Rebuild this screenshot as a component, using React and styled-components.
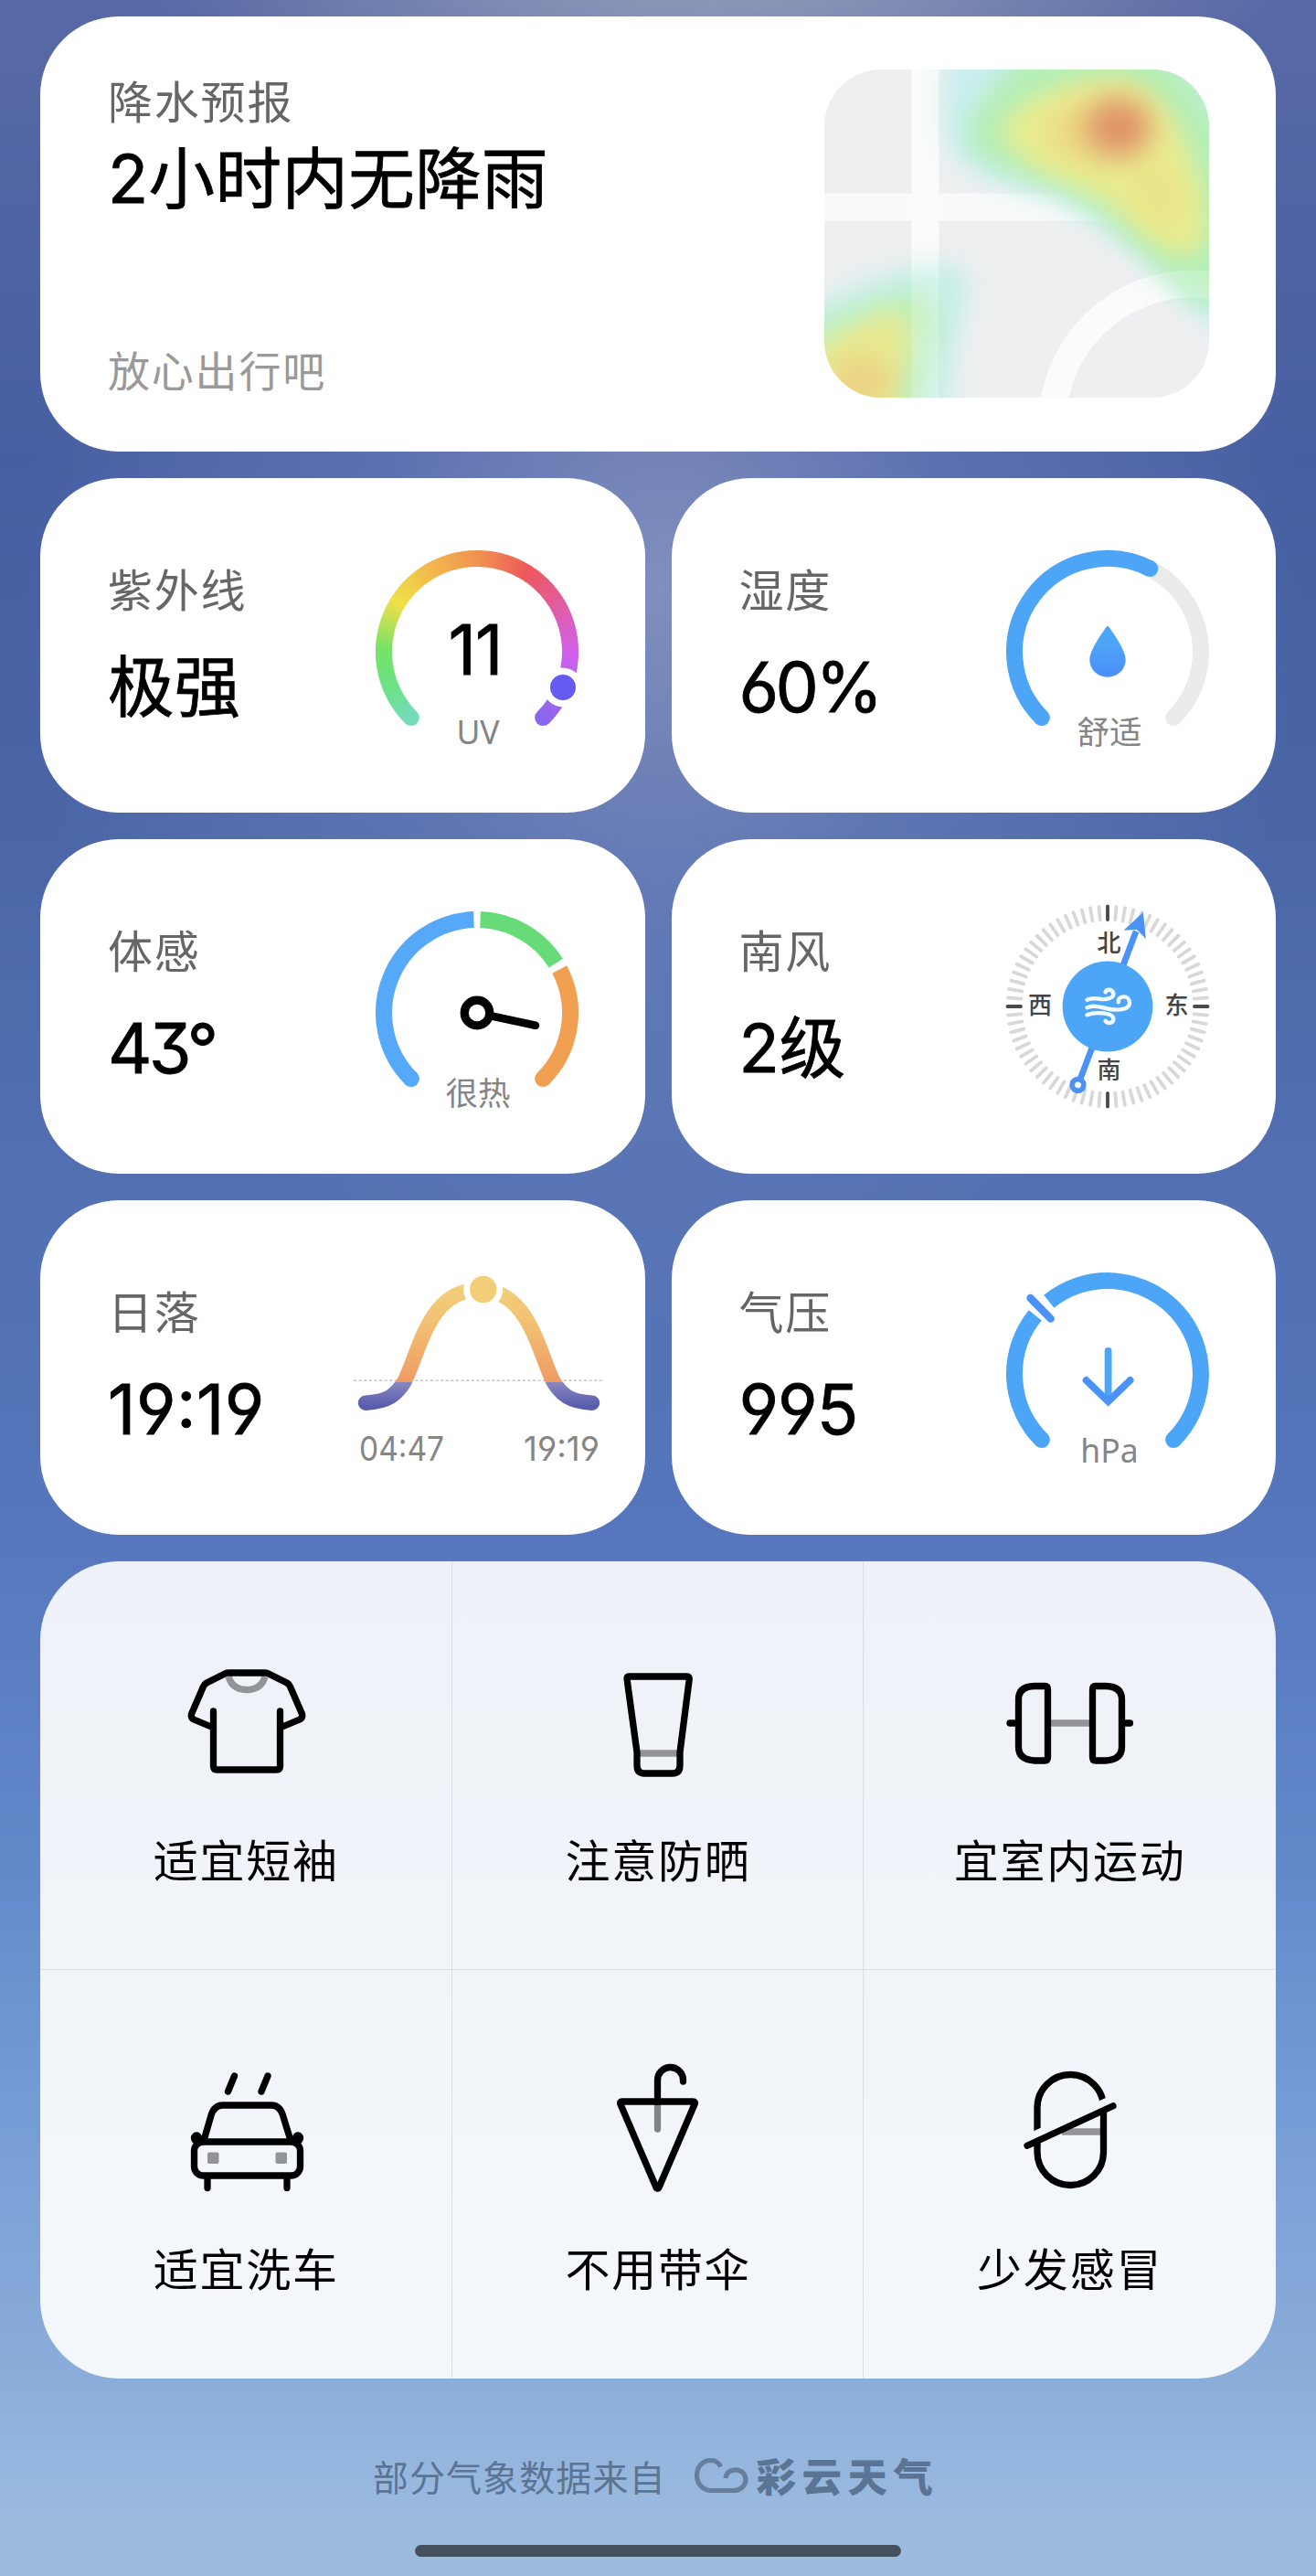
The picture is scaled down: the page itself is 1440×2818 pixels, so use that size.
import React from "react";
import styled, { createGlobalStyle } from "styled-components";

const BLUE = "#4da5f7";
const DEEP_BLUE = "#4a92f5";
const GREY = "#939398";

const GlobalStyle = createGlobalStyle`
	* {
		box-sizing: border-box;
	}

	body {
		margin: 0;
		font-family: "Noto Sans CJK SC", sans-serif;
	}
`;

const Page = styled.main`
	width: 1440px;
	height: 2818px;
	padding: 18px 44px 0;
	display: flex;
	flex-direction: column;
	gap: 29px;
	overflow: hidden;
	background:
		radial-gradient(ellipse 620px 160px at 780px -20px, rgba(160, 168, 188, 0.8), rgba(160, 168, 188, 0)),
		radial-gradient(ellipse 700px 860px at 725px 640px, rgba(150, 160, 200, 0.72), rgba(130, 145, 200, 0.36) 45%, rgba(110, 130, 200, 0)),
		linear-gradient(180deg, #5869a5 0, #475fa2 500px, #4a66a6 900px, #5270b2 1300px, #5677bd 1680px, #6389cb 2050px, #759cd5 2300px, #8badda 2600px, #9bbbdf 2760px, #9bbbdf 100%);
`;

const Card = styled.section`
	background: #fff;
	border-radius: 86px;
	display: flex;
	justify-content: space-between;
`;

const RainCard = styled(Card)`
	height: 476px;
	padding: 58px 73px 61px 74px;
`;

const RainText = styled.div`
	display: flex;
	flex-direction: column;
	padding-top: 3px;
`;

const Label = styled.div`
	font-size: 49px;
	line-height: 60px;
	letter-spacing: 1.8px;
	color: #666;
`;

const Value = styled.div`
	font-family: Inter, "Noto Sans CJK SC", sans-serif;
	font-feature-settings: "cv03", "cv04", "cv09", "calt";
	font-weight: 400;
	-webkit-text-stroke: 0.8px #000;
	font-size: ${({ $size = 75 }) => $size}px;
	line-height: 84px;
	letter-spacing: ${({ $spacing = 0 }) => $spacing}px;
	color: #000;
	white-space: nowrap;
`;

const RainTitle = styled(Value)`
	margin-top: 15px;
`;

const RainNote = styled(Label)`
	margin-top: auto;
	font-size: 46px;
	color: #999;
`;

const MapTile = styled.svg`
	display: block;
	width: 421px;
	height: 359px;
	border-radius: 62px;
	overflow: hidden;
`;

const MetricGrid = styled.div`
	display: grid;
	grid-template-columns: 1fr 1fr;
	grid-auto-rows: 366px;
	gap: 29px;
`;

const MetricCard = styled(Card)`
	align-items: center;
	padding: 0 73px 0 74px;
`;

const MetricText = styled.div`
	display: flex;
	flex-direction: column;
	gap: 37px;
	padding-bottom: 5px;
`;

const GaugeSvg = styled.svg`
	display: block;
	width: 222px;
	height: 222px;
	margin-top: ${({ $shift = 14 }) => $shift}px;
	overflow: visible;
`;

const SunSvg = styled.svg`
	display: block;
	width: 274px;
	height: 210px;
	margin: 14px -28px 0 0;
	overflow: visible;
`;

const Caption = styled.text`
	font-family: "Noto Sans", "Noto Sans CJK SC", sans-serif;
	font-size: 35.5px;
	fill: #858585;
	text-anchor: middle;
`;

const TimeText = styled.text`
	font-family: Inter, sans-serif;
	font-feature-settings: "cv03", "cv04", "calt";
	font-size: 36.5px;
	fill: #858585;
`;

const GaugeNumber = styled.text`
	font-family: Inter, sans-serif;
	font-weight: 400;
	font-size: 75px;
	letter-spacing: -1px;
	text-anchor: middle;
	stroke: #000;
	stroke-width: 0.8px;
`;

const Direction = styled.text`
	font-family: "Noto Sans CJK SC", sans-serif;
	font-weight: 500;
	font-size: 26px;
	fill: #444;
	text-anchor: middle;
`;

const TipsCard = styled.section`
	height: 894px;
	border-radius: 86px;
	overflow: hidden;
	display: grid;
	grid-template-columns: repeat(3, 1fr);
	grid-template-rows: repeat(2, 1fr);
	background: linear-gradient(180deg, #eef2f8, #f4f7fb);
`;

const Tip = styled.div`
	display: flex;
	flex-direction: column;
	align-items: center;
	padding-top: 97px;
	border-right: 1px solid ${({ $last }) => ($last ? "transparent" : "#dadee5")};
	border-bottom: 1px solid ${({ $bottom }) => ($bottom ? "transparent" : "#dadee5")};
`;

const TipIcon = styled.svg`
	display: block;
	width: 160px;
	height: 160px;
	fill: none;
	stroke: #000;
	stroke-width: 7.3;
	stroke-linecap: round;
	stroke-linejoin: round;
`;

const TipLabel = styled(Label)`
	margin: 38px 0 0 1px;
	color: #000;
`;

const Footer = styled.footer`
	margin-top: 47px;
	display: flex;
	justify-content: center;
	align-items: center;
	line-height: 60px;
	color: #5b7493;
`;

const Source = styled.span`
	font-size: 39px;
	letter-spacing: 1.1px;
`;

const CloudLogo = styled.svg`
	width: 60px;
	height: 42px;
	margin-left: 30px;
	fill: none;
	stroke: #667f9f;
	stroke-width: 5.2;
`;

const Brand = styled.span`
	margin: 0 5px 0 9px;
	font-size: 43.5px;
	font-weight: 900;
	letter-spacing: 6.4px;
`;

const HomeBar = styled.div`
	width: 532px;
	height: 13px;
	margin: 17px auto 0;
	border-radius: 7px;
	background: #46515e;
`;

// Angles run clockwise from the lower-left end of the 270 degree dial.
const point = (deg, r = 102) => {
	const a = ((deg + 135) * Math.PI) / 180;
	return [r * Math.cos(a), r * Math.sin(a)];
};

const arc = (from, to, r = 102) => {
	const [x1, y1] = point(from, r);
	const [x2, y2] = point(to, r);
	return `M${x1.toFixed(2)} ${y1.toFixed(2)}A${r} ${r} 0 ${to - from > 180 ? 1 : 0} 1 ${x2.toFixed(2)} ${y2.toFixed(2)}`;
};

const EndCap = ({ at, fill }) => {
	const [cx, cy] = point(at);
	return <circle cx={cx} cy={cy} r="9" fill={fill} />;
};

const Arc = ({ from, to, color }) => (
	<path d={arc(from, to)} fill="none" stroke={color} strokeWidth="18" />
);

const UV_STOPS = [
	[0, [118, 220, 186]],
	[20, [108, 226, 138]],
	[45, [118, 226, 104]],
	[76, [240, 224, 72]],
	[105, [241, 184, 78]],
	[135, [240, 146, 80]],
	[166, [238, 88, 92]],
	[200, [222, 94, 176]],
	[225, [210, 96, 236]],
	[245, [168, 102, 238]],
	[270, [138, 102, 238]],
];

const uvColor = (deg) => {
	const i = UV_STOPS.findIndex(([d]) => d > deg) - 1;
	const [d0, c0] = UV_STOPS[i];
	const [d1, c1] = UV_STOPS[i + 1];
	const t = (deg - d0) / (d1 - d0);
	return `rgb(${c0.map((c, k) => Math.round(c + (c1[k] - c) * t)).join(",")})`;
};

const UvGauge = () => (
	<GaugeSvg viewBox="-111 -111 222 222">
		<EndCap at={0} fill={uvColor(0)} />
		<EndCap at={270} fill={uvColor(269.9)} />
		{Array.from({ length: 135 }, (_, i) => (
			<Arc key={i} from={i * 2} to={Math.min(i * 2 + 2.6, 270)} color={uvColor(i * 2)} />
		))}
		<circle cx="94" cy="39" r="21.5" fill="#fff" />
		<circle cx="94" cy="39" r="14" fill="#655bf0" />
		<GaugeNumber x="-2" y="24.5">11</GaugeNumber>
		<Caption x="1" y="101">UV</Caption>
	</GaugeSvg>
);

const HumidityGauge = () => (
	<GaugeSvg viewBox="-111 -111 222 222">
		<defs>
			<linearGradient id="drop" x1="0" y1="0" x2="0" y2="1">
				<stop offset="0.3" stopColor={BLUE} />
				<stop offset="1" stopColor="#4a8ff8" />
			</linearGradient>
		</defs>
		<Arc from={162} to={270} color="#ebebeb" />
		<EndCap at={270} fill="#ebebeb" />
		<Arc from={0} to={162} color={BLUE} />
		<EndCap at={0} fill={BLUE} />
		<EndCap at={162} fill={BLUE} />
		<path d="M-1.6 -27Q0 -29 1.6 -27C9 -16 19.7 -1 19.7 8.5C19.7 19.5 10.5 27.7 0 27.7S-19.7 19.5 -19.7 8.5C-19.7 -1 -9 -16 -1.6 -27Z" fill="url(#drop)" />
		<Caption x="2" y="101">舒适</Caption>
	</GaugeSvg>
);

const FeelsLikeGauge = () => (
	<GaugeSvg viewBox="-111 -111 222 222">
		<EndCap at={0} fill="#55a9f8" />
		<EndCap at={270} fill="#f0a050" />
		<Arc from={0} to={133} color="#55a9f8" />
		<Arc from={137} to={192.8} color="#68db79" />
		<Arc from={197.2} to={270} color="#f0a050" />
		<circle r="13.8" fill="none" stroke="#000" strokeWidth="9.2" />
		<path d="M16 3.5L64 13.8" stroke="#000" strokeWidth="8.6" strokeLinecap="round" />
		<Caption x="1" y="101">很热</Caption>
	</GaugeSvg>
);

const Compass = () => (
	<GaugeSvg $shift={0} viewBox="-111 -111 222 222">
		{Array.from({ length: 72 }, (_, i) => (
			<line
				key={i}
				y1="-109.5"
				y2="-95"
				transform={`rotate(${i * 5})`}
				stroke={i % 18 ? "#d8d8d8" : "#4a4a4a"}
				strokeWidth="3.8"
				strokeLinecap="round"
			/>
		))}
		<Direction x="1.5" y="-60.5">北</Direction>
		<Direction x="1.5" y="79">南</Direction>
		<Direction x="-74" y="7.5">西</Direction>
		<Direction x="75.5" y="7.5">东</Direction>
		<g transform="rotate(20.7)">
			<path d="M0 -88V84" stroke={DEEP_BLUE} strokeWidth="6.8" />
			<path d="M0 -110L13 -84L0 -90L-13 -84Z" fill={DEEP_BLUE} />
			<circle cy="91.8" r="6.3" fill="#fff" stroke={DEEP_BLUE} strokeWidth="5.8" />
		</g>
		<circle r="49.4" fill={BLUE} />
		<g fill="none" stroke="#f2fbff" strokeWidth="4.4" strokeLinecap="round">
			<path d="M-22.5 -7.3C-14 -11 -9 -7 -2 -8C4 -8.8 6.6 -11 6.4 -14C6.2 -17 3.8 -18.2 1.5 -18.2C-0.5 -18.2 -2 -17.3 -2.4 -15.6" />
			<path d="M-22.5 1.3C-13 -2.5 -6 2 4 3.2C14 4.4 24 3 24 -4C24 -8 21 -10.6 17.8 -10.6C14 -10.6 11.4 -8.5 11.8 -4.8" />
			<path d="M-22.5 9.2C-15 6 -8 7 -3 7.6C3 8.4 6.4 10.5 6.4 14C6.4 16.8 4 18 2 18C0 18 -1.6 17.4 -2.4 15.8" />
		</g>
	</GaugeSvg>
);

const SunChart = () => (
	<SunSvg viewBox="0 0 274 210">
		<defs>
			<linearGradient id="sunPath" gradientUnits="userSpaceOnUse" x1="0" y1="6" x2="0" y2="146">
				<stop offset="0" stopColor="#f3d07a" />
				<stop offset="0.3" stopColor="#f2c173" />
				<stop offset="0.77" stopColor="#f09a64" />
				<stop offset="0.77" stopColor="#8c88c2" />
				<stop offset="0.96" stopColor="#5a5cae" />
			</linearGradient>
		</defs>
		<path d="M0 112.3H274" stroke="#c4c4c4" strokeWidth="1.4" strokeDasharray="3 2.6" />
		<path
			d="M13 136.7C37 135.5 47 128 56 112.5C73 77 83 13 137 13S201 77 218 112.5C227 128 237 135.5 261 136.7"
			fill="none"
			stroke="url(#sunPath)"
			strokeWidth="16.5"
			strokeLinecap="round"
		/>
		<circle cx="141.7" cy="12.5" r="21.5" fill="#fff" />
		<circle cx="141.7" cy="12.5" r="14.7" fill="#f3ce79" />
		<TimeText x="6" y="200" textLength="93" lengthAdjust="spacingAndGlyphs">04:47</TimeText>
		<TimeText x="186" y="200" textLength="83" lengthAdjust="spacingAndGlyphs">19:19</TimeText>
	</SunSvg>
);

const PressureGauge = () => (
	<GaugeSvg viewBox="-111 -111 222 222">
		<EndCap at={0} fill={BLUE} />
		<EndCap at={270} fill={BLUE} />
		<Arc from={0} to={84} color={BLUE} />
		<Arc from={96} to={270} color={BLUE} />
		<path d="M-84.5 -83L-62.3 -60.4" stroke={DEEP_BLUE} strokeWidth="8.4" strokeLinecap="round" />
		<g fill="none" stroke={DEEP_BLUE} strokeWidth="7.8" strokeLinecap="round">
			<path d="M0.6 -25V28" stroke={BLUE} />
			<path d="M-23.4 7L0.6 30.2L24.6 7" />
		</g>
		<Caption x="2" y="97">hPa</Caption>
	</GaugeSvg>
);

const RainMap = () => (
	<MapTile viewBox="0 0 421 359">
		<defs>
			<filter id="soft" x="-30%" y="-30%" width="160%" height="160%">
				<feGaussianBlur stdDeviation="13" />
			</filter>
			<filter id="softer" x="-60%" y="-60%" width="220%" height="220%">
				<feGaussianBlur stdDeviation="15" />
			</filter>
		</defs>
		<rect width="421" height="359" fill="#eeeff1" />
		<g fill="none" stroke="#f9fafa" strokeWidth="30">
			<path d="M110.3 0V359" />
			<path d="M0 150.5H421" />
			<circle cx="403" cy="388" r="153.5" />
		</g>
		<g filter="url(#soft)">
			<path d="M146 -40C124 20 126 70 144 96C170 124 230 134 262 150C310 174 350 208 380 238C400 262 420 284 470 300V-60Z" fill="#c2eeee" opacity="0.85" />
		</g>
		<g filter="url(#soft)">
			<path d="M240 -50C210 -4 156 34 154 76C164 110 232 120 264 136C310 160 350 206 392 246C410 260 440 264 470 260V100C430 70 410 10 366 -50Z" fill="#b4f0b4" opacity="0.9" />
		</g>
		<g filter="url(#soft)">
			<path d="M194 66C206 34 270 8 320 8C364 12 388 54 402 96C422 150 426 198 398 204C368 206 336 168 310 146C276 122 204 110 194 66Z" fill="#e8ec90" />
			<path d="M-30 264C20 246 60 222 100 216C130 208 158 216 158 232C154 270 138 310 132 400H-40Z" fill="#bdeee6" opacity="0.85" />
			<path d="M-30 288C20 264 60 244 96 240C124 240 126 262 122 290C118 320 108 340 104 400H-40Z" fill="#bdf0b4" opacity="0.9" />
			<path d="M-30 316C20 290 50 266 76 266C98 270 96 300 86 330C80 350 74 360 66 400H-40Z" fill="#e8ea92" />
		</g>
		<g filter="url(#softer)">
			<ellipse cx="40" cy="342" rx="34" ry="30" fill="#ebd284" />
			<ellipse cx="364" cy="136" rx="24" ry="36" fill="#ebde84" opacity="0.7" transform="rotate(-25 364 136)" />
			<ellipse cx="302" cy="68" rx="60" ry="36" fill="#ecd684" opacity="0.85" />
			<ellipse cx="321" cy="63" rx="37" ry="33" fill="#df8f66" opacity="0.95" />
		</g>
		<g fill="none" stroke="#fff" strokeWidth="30" opacity="0.2">
			<path d="M110.3 0V359" />
			<circle cx="403" cy="388" r="153.5" />
		</g>
	</MapTile>
);

const METRICS = [
	{ label: "紫外线", value: "极强", size: 72.5, spacing: 0, Chart: UvGauge },
	{ label: "湿度", value: "60%", spacing: -3.5, Chart: HumidityGauge },
	{ label: "体感", value: "43°", spacing: -3.5, Chart: FeelsLikeGauge },
	{ label: "南风", value: "2级", size: 72.5, spacing: 0, Chart: Compass },
	{ label: "日落", value: "19:19", spacing: 0.4, Chart: SunChart },
	{ label: "气压", value: "995", spacing: -1, Chart: PressureGauge },
];

const ShirtIcon = () => (
	<>
		<path d="M61 29Q65 43.5 81 43.5T101 29" stroke={GREY} strokeLinecap="butt" />
		<path d="M44.5 67V127Q44.5 131 48.5 131H113.5Q117.5 131 117.5 127V67M44.5 85L23 76Q19.5 74 20.5 70L33.5 40Q34.5 37.5 37 36L57 26Q58.5 25 60.5 25H101.5Q103.5 25 105 26L125 36Q127.5 37.5 128.5 40L141.5 70Q142.5 74 139 76L117.5 85" />
	</>
);

const SunscreenIcon = () => (
	<>
		<path d="M60 113H102" stroke={GREY} strokeLinecap="butt" />
		<path d="M49 29H113Q115.5 29 115.3 31.5L105 112V126Q105 135 97 135H66Q58 135 58 126V112L47 31.5Q46.7 29 49 29Z" />
	</>
);

const DumbbellIcon = () => (
	<>
		<path d="M57 80H105" stroke={GREY} strokeLinecap="butt" />
		<path d="M53.5 39.5H42Q24.5 40 24.5 54V106Q24.5 120 42 121H53.5Q56.5 121 56.5 117V43.5Q56.5 39.5 53.5 39.5Z" />
		<path d="M108.5 39.5H120Q137.5 40 137.5 54V106Q137.5 120 120 121H108.5Q105.5 121 105.5 117V43.5Q105.5 39.5 108.5 39.5Z" />
		<path d="M15 80H22M140 80H146.5" />
	</>
);

const CarIcon = () => (
	<>
		<path d="M67.5 19L60.5 36M104 19L97 36" />
		<path d="M34.5 88L42 62Q45.5 51 55 51H108Q117 51 120.5 62L128.5 88" />
		<rect x="23.5" y="91" width="116" height="37" rx="10" />
		<path d="M38 131V141.5M125 131V141.5" />
		<ellipse cx="26" cy="87" rx="2.5" ry="3" fill="#000" />
		<ellipse cx="137" cy="87" rx="2.5" ry="3" fill="#000" />
		<rect x="38" y="102.5" width="12.5" height="12.5" rx="2" fill={GREY} stroke="none" />
		<rect x="112.5" y="102.5" width="12.5" height="12.5" rx="2" fill={GREY} stroke="none" />
	</>
);

const UmbrellaIcon = () => (
	<>
		<path d="M80.5 50V77" stroke="#7f8386" />
		<path d="M80.5 47V23.5A14 14 0 0 1 108.5 23.5V25" />
		<path d="M42 47H119Q122.5 47 121 50L82 141Q80.5 143.5 79 141L40 50Q38.5 47 42 47Z" />
	</>
);

const PillIcon = () => (
	<>
		<mask id="pillCut" maskUnits="userSpaceOnUse" x="0" y="0" width="160" height="160">
			<rect width="160" height="160" fill="#fff" stroke="none" />
			<path d="M20 93.5L140 38.3" stroke="#000" strokeWidth="8.5" strokeLinecap="butt" />
		</mask>
		<path d="M72 80H114" stroke={GREY} strokeLinecap="butt" />
		<rect x="45" y="17.5" width="72.5" height="121" rx="36.2" mask="url(#pillCut)" />
		<path d="M34 95.3L128 51.7" />
	</>
);

const TIPS = [
	{ label: "适宜短袖", Icon: ShirtIcon },
	{ label: "注意防晒", Icon: SunscreenIcon },
	{ label: "宜室内运动", Icon: DumbbellIcon },
	{ label: "适宜洗车", Icon: CarIcon },
	{ label: "不用带伞", Icon: UmbrellaIcon },
	{ label: "少发感冒", Icon: PillIcon },
];

const App = () => (
	<>
		<GlobalStyle />
		<Page>
			<RainCard>
				<RainText>
					<Label>降水预报</Label>
					<RainTitle $size={72.5} $spacing={0.4}>2小时内无降雨</RainTitle>
					<RainNote>放心出行吧</RainNote>
				</RainText>
				<RainMap />
			</RainCard>
			<MetricGrid>
				{METRICS.map(({ label, value, size, spacing, Chart }) => (
					<MetricCard key={label}>
						<MetricText>
							<Label>{label}</Label>
							<Value $size={size} $spacing={spacing}>{value}</Value>
						</MetricText>
						<Chart />
					</MetricCard>
				))}
			</MetricGrid>
			<TipsCard>
				{TIPS.map(({ label, Icon }, i) => (
					<Tip key={label} $last={i % 3 === 2} $bottom={i > 2}>
						<TipIcon viewBox="0 0 160 160">
							<Icon />
						</TipIcon>
						<TipLabel>{label}</TipLabel>
					</Tip>
				))}
			</TipsCard>
			<Footer>
				<Source>部分气象数据来自</Source>
				<CloudLogo viewBox="0 0 60 42">
					<path d="M29.5 11.5C27.5 6.5 23 4.5 18.5 4.5C9.5 4.5 3.5 12 3.5 20.5C3.5 30 10 37.500 19 37.500H44C51 37.500 57 32 57 25.800C57 19 51.500 14.800 46 14.800C40 14.800 35.500 18.500 35 24" />
				</CloudLogo>
				<Brand>彩云天气</Brand>
			</Footer>
			<HomeBar />
		</Page>
	</>
);

export default App;
